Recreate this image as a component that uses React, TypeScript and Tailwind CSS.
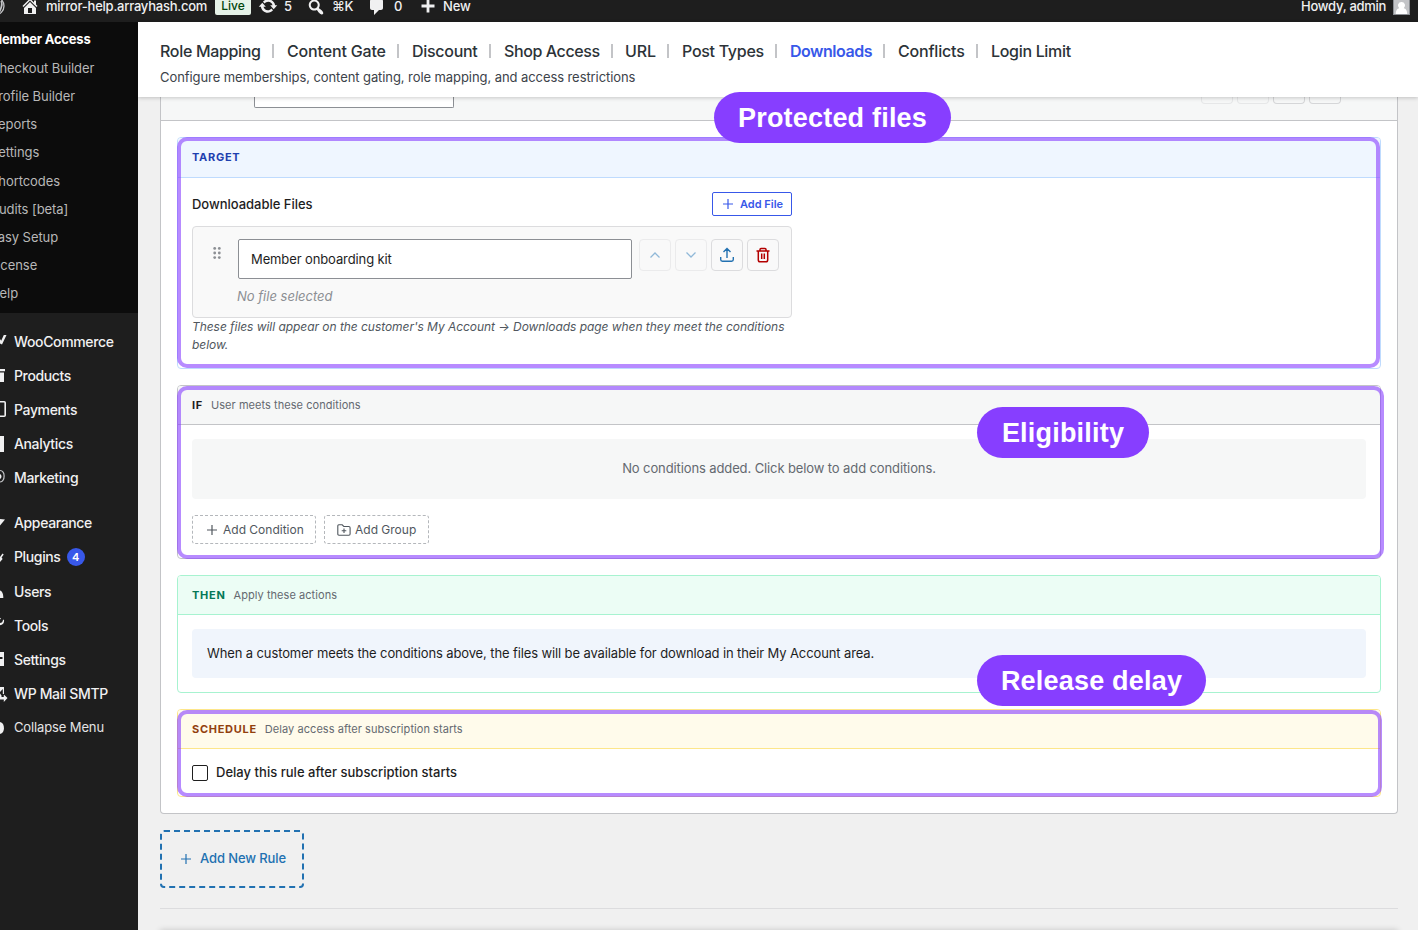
import type { ReactNode } from "react";
import clsx from "clsx";

const topIcons = {
  home: "M16 8.5l1.53 1.53-1.06 1.06L10 4.6l-6.47 6.49-1.06-1.06L10 2.5l4 4v-2h2v4zm-6-2.46l6 5.99V18H4v-5.97zM12 17v-5H8v5h4z",
  update:
    "M10.2 3.28c3.53 0 6.43 2.61 6.92 6h2.08l-3.5 4-3.5-4h2.32c-.45-1.97-2.21-3.45-4.32-3.45-1.45 0-2.73.71-3.54 1.78L4.95 5.66C6.23 4.2 8.11 3.28 10.2 3.28zm-.4 13.44c-3.52 0-6.43-2.61-6.92-6H.8l3.5-4c1.17 1.33 2.33 2.67 3.5 4H5.48c.45 1.97 2.21 3.45 4.32 3.45 1.45 0 2.73-.71 3.54-1.78l1.71 1.95c-1.28 1.46-3.15 2.38-5.25 2.38z",
  search:
    "M12.14 4.18c1.87 1.87 2.11 4.75.72 6.89.12.1.22.21.36.31.2.16.47.36.81.59.34.24.56.39.66.47.42.31.73.57.94.78.32.32.6.65.84 1 .25.35.44.69.59 1.04.14.35.21.68.18 1-.02.32-.14.59-.36.81s-.49.34-.81.36c-.31.02-.65-.04-.99-.19-.35-.14-.7-.34-1.04-.59-.35-.24-.68-.52-1-.84-.21-.21-.47-.52-.77-.93-.1-.13-.25-.35-.47-.66-.22-.32-.4-.57-.56-.78-.16-.2-.29-.35-.44-.5-2.07 1.09-4.69.76-6.44-.98-2.14-2.15-2.14-5.64 0-7.78 2.15-2.15 5.63-2.15 7.78 0zm-1.41 6.36c1.36-1.37 1.36-3.58 0-4.95-1.37-1.37-3.59-1.37-4.95 0-1.37 1.37-1.37 3.58 0 4.95 1.36 1.37 3.58 1.37 4.95 0z",
  comment:
    "M5 2h9c1.1 0 2 .9 2 2v7c0 1.1-.9 2-2 2h-2l-5 5v-5H5c-1.1 0-2-.9-2-2V4c0-1.1.9-2 2-2z",
  plus: "M16.5 8.6v2.8h-5.1v5.1H8.6v-5.1H3.5V8.6h5.1V3.5h2.8v5.1z",
};

const TopIcon = ({ d, className }: { d: string; className?: string }) => (
  <svg
    viewBox="0 0 20 20"
    className={clsx("h-5 w-5 shrink-0 fill-[#f0f0f1]", className)}
  >
    <path d={d} />
  </svg>
);

const TopBar = () => (
  <header className="flex h-[22px] items-start overflow-hidden bg-[#1e1e1e] text-[13px] leading-[13px] whitespace-nowrap text-[#f0f0f1]">
    <svg viewBox="0 0 20 20" className="-mt-1 h-5 w-5 shrink-0 -ml-[15px]">
      <circle cx="10" cy="10" r="9" fill="none" stroke="#c3c4c7" strokeWidth="1.3" />
      <path d="M16 5c2 3 .5 6-1.5 11" fill="none" stroke="#c3c4c7" strokeWidth="1.6" />
    </svg>
    <TopIcon d={topIcons.home} className="-mt-1 ml-[15px]" />
    <span className="ml-[6px] w-[169px] font-medium tracking-[-0.018em]">
      mirror-help.arrayhash.com
    </span>
    <span className="h-[15px] w-9 rounded-b-[2px] bg-[#e6f2e8] text-center text-[12px] leading-[12px] font-medium text-[#00450c]">
      Live
    </span>
    <TopIcon d={topIcons.update} className="-mt-1 ml-[7px]" />
    <span className="ml-[6px] w-[22px] font-medium">5</span>
    <TopIcon d={topIcons.search} className="-mt-[3px]" />
    <span className="ml-[6px] w-[32px] font-medium tracking-[-0.02em]">⌘K</span>
    <TopIcon d={topIcons.comment} className="-mt-[3px] ml-[3px]" />
    <span className="ml-[7px] w-[24px] font-medium">0</span>
    <TopIcon d={topIcons.plus} className="-mt-1" />
    <span className="ml-[5px] font-medium tracking-[-0.01em]">New</span>
    <span className="ml-auto w-[92px] font-medium tracking-[-0.02em]">
      Howdy, admin
    </span>
    <svg viewBox="0 0 17 17" className="mr-[8px] h-[17px] w-[17px] -mt-[2px] shrink-0">
      <rect width="17" height="17" fill="#8c8f94" />
      <rect x="1" y="0" width="15" height="16" fill="#c3c4c7" />
      <path
        d="M8.5 4a3.5 3.5 0 0 1 2.3 6.2c2 .6 3.4 2 3.4 5.8H2.8c0-3.8 1.4-5.2 3.4-5.8A3.5 3.5 0 0 1 8.5 4z"
        fill="#fff"
      />
    </svg>
  </header>
);

const submenu = [
  "Checkout Builder",
  "Profile Builder",
  "Reports",
  "Settings",
  "Shortcodes",
  "Audits [beta]",
  "Easy Setup",
  "License",
  "Help",
];

type MenuEntry = {
  label: string;
  icon: ReactNode;
  gap?: boolean;
  badge?: number;
  small?: boolean;
};

const menu: MenuEntry[] = [
  { label: "WooCommerce", icon: <path d="M0 12.5V8l1.2 1.8L3.800 4h2.700L2 13.500z" /> },
  { label: "Products", icon: <path d="M0 4h5v2.200H0zM0 7.500h4V17H0z" /> },
  {
    label: "Payments",
    icon: <path d="M0 2.800h4.200q1 0 1 1v12.400q0 1-1 1H0" fill="none" stroke="#f0f0f1" strokeWidth="1.6" />,
  },
  { label: "Analytics", icon: <path d="M0 2h4v16H0z" /> },
  {
    label: "Marketing",
    icon: (
      <>
        <path d="M0 2.500c5.500 0 5.500 10.500 0 11.500" fill="none" stroke="#c3c4c7" strokeWidth="1.2" />
        <path d="M0 6c2 1 2 4 0 5z" />
      </>
    ),
  },
  { label: "Appearance", gap: true, icon: <path d="M0 6l5 .5L0 12.500z" /> },
  { label: "Plugins", badge: 4, icon: <path d="M0 10l2.500-3.500 1.200 1L1.600 10.500 2.600 12 0 15z" /> },
  { label: "Users", icon: <path d="M0 9.500c2 .8 3.300 2.500 3.300 7.500H0z" /> },
  {
    label: "Tools",
    icon: <path d="M0 8c1.500 0 3-1 3-3.500l1 .5c.5 3-1.500 5-4 5.200zM0 3.500l1-.8v1.800z" />,
  },
  { label: "Settings", icon: <path d="M0 3h4v14H0v-7h2.500V8H0z" /> },
  {
    label: "WP Mail SMTP",
    icon: (
      <>
        <path d="M0 3h4v7H2.800V5L0 8z" />
        <path d="M0 9.500l1.500 2V13h2.300v-2.500L7.500 14l-3.700 4v-2.500H0z" />
      </>
    ),
  },
  { label: "Collapse Menu", small: true, icon: <path d="M0 4c5.300.5 5.300 11.500 0 12z" /> },
];

const Sidebar = () => (
  <nav className="w-[138px] shrink-0 overflow-hidden bg-[#1e1e1e] whitespace-nowrap">
    <div className="h-[291px] bg-[#0c0c0c] pt-[3px] text-[13px]">
      <div className="-ml-[10px] h-[29px] leading-[28px] font-bold tracking-[-0.015em] text-white">
        Member Access
      </div>
      <ul className="-ml-[10px] tracking-[-0.005em] text-[#b8b8b8]">
        {submenu.map((item) => (
          <li key={item} className="h-[28.15px] leading-[28.5px]">
            {item}
          </li>
        ))}
      </ul>
    </div>
    <ul className="pt-[11px] text-[14px] font-medium text-[#f0f0f1]">
      {menu.map((item) => (
        <li
          key={item.label}
          className={clsx("flex h-[34.2px] items-center", item.gap && "mt-[10.6px]")}
        >
          <svg viewBox="0 0 8 20" className="mr-[6px] h-5 w-2 shrink-0 fill-[#f0f0f1]">
            {item.icon}
          </svg>
          <span
            className={
              item.small
                ? "text-[13px] font-normal tracking-[-0.01em] text-[#e4e4e5]"
                : "tracking-[-0.026em]"
            }
          >
            {item.label}
          </span>
          {item.badge && (
            <span className="ml-[6px] h-[18px] w-[18px] rounded-full bg-[#3858e9] text-center text-[11px] leading-[18px] font-semibold text-white">
              {item.badge}
            </span>
          )}
        </li>
      ))}
    </ul>
  </nav>
);

const tabs = [
  { label: "Role Mapping", style: "w-[112px] tracking-[-0.02em]" },
  { label: "Content Gate", style: "w-[110px] tracking-[-0.01em]" },
  { label: "Discount", style: "w-[77px] tracking-[-0.018em]" },
  { label: "Shop Access", style: "w-[107px] tracking-[-0.025em]" },
  { label: "URL", style: "w-[42px] -ml-px tracking-[-0.01em]" },
  { label: "Post Types", style: "w-[93px] tracking-[-0.018em]" },
  { label: "Downloads", style: "w-[93px] tracking-[-0.03em]", active: true },
  { label: "Conflicts", style: "w-[78px] tracking-[-0.012em]" },
  { label: "Login Limit", style: "w-[90px] tracking-[-0.02em]" },
];

const PageHeader = () => (
  <div className="relative z-10 h-[75px] bg-white pl-[22px] pt-[19px] whitespace-nowrap shadow-[0_1px_4px_rgba(0,0,0,0.2)]">
    <div className="flex h-5 items-center text-[16px] leading-5 font-medium text-[#2c3338]">
      {tabs.map((tab, i) => (
        <div key={tab.label} className="flex items-center">
          {i > 0 && <div className="mr-[13px] h-[14px] w-[2px] bg-[#c3c4c7]" />}
          <div className={clsx(tab.style, tab.active && "font-semibold text-[#3858e9]")}>
            {tab.label}
          </div>
        </div>
      ))}
    </div>
    <p className="mt-[7px] text-[13px] leading-[18px] tracking-[-0.006em] text-[#3c434a]">
      Configure memberships, content gating, role mapping, and access restrictions
    </p>
  </div>
);

const PlusIcon = ({ className }: { className?: string }) => (
  <svg viewBox="0 0 12 12" className={clsx("h-3 w-3 shrink-0", className)}>
    <path d="M6 1v10M1 6h10" fill="none" stroke="currentColor" strokeWidth="1.2" />
  </svg>
);

const Pill = ({ className, children }: { className: string; children: ReactNode }) => (
  <div
    className={clsx(
      "absolute z-20 flex h-[51px] items-center justify-center rounded-full bg-[#873eff] pt-px font-['Liberation_Sans',sans-serif] text-[27px] font-bold tracking-[0.2px] whitespace-nowrap text-white",
      className,
    )}
  >
    {children}
  </div>
);

const Outline = ({ className }: { className: string }) => (
  <div
    className={clsx(
      "pointer-events-none absolute rounded-[10px] border-4 border-[#873eff]/60",
      className,
    )}
  />
);

type SectionProps = {
  title: string;
  hint?: string;
  box: string;
  head: string;
  titleColor: string;
  children: ReactNode;
};

const Section = ({ title, hint, box, head, titleColor, children }: SectionProps) => (
  <section className={clsx("relative rounded-[4px] border", box)}>
    <div
      className={clsx(
        "flex items-center gap-2 rounded-t-[3px] border-b px-[14px] text-[11px]",
        head,
      )}
    >
      <h3 className={clsx("font-bold tracking-[0.065em]", titleColor)}>{title}</h3>
      {hint && <span className="tracking-[0.005em] text-[#646970]">{hint}</span>}
    </div>
    {children}
  </section>
);

const iconButton =
  "flex h-8 w-8 items-center justify-center rounded-[4px] border";

const FileRow = () => (
  <div className="flex h-[92px] rounded-[4px] border border-[#dcdcde] bg-[#f9f9f9] pt-3">
    <svg viewBox="0 0 8 14" className="mt-[7px] ml-5 h-[14px] w-2 fill-[#8c8f94]">
      {[2.4, 7, 11.6].map((y) => (
        <g key={y}>
          <circle cx="1.7" cy={y} r="1.4" />
          <circle cx="6.3" cy={y} r="1.4" />
        </g>
      ))}
    </svg>
    <div className="ml-[17px]">
      <div className="flex h-10 w-[394px] items-center rounded-[2px] border border-[#8c8f94] bg-white px-3 pt-[2px] text-[13px] text-[#1e1e1e]">
        Member onboarding kit
      </div>
      <p className="mt-2 -ml-px text-[13px] leading-[19px] tracking-normal text-[#8c8f94] italic">
        No file selected
      </p>
    </div>
    <div className="ml-[7px] flex gap-1">
      <button className={clsx(iconButton, "border-[#ebebec] text-[#90b8d8]")}>
        <svg viewBox="0 0 12 12" className="h-3 w-3">
          <path d="M1.500 8.500L6 4l4.500 4.500" fill="none" stroke="currentColor" strokeWidth="1.3" />
        </svg>
      </button>
      <button className={clsx(iconButton, "border-[#ebebec] text-[#90b8d8]")}>
        <svg viewBox="0 0 12 12" className="h-3 w-3">
          <path d="M1.500 3.500L6 8l4.500-4.500" fill="none" stroke="currentColor" strokeWidth="1.3" />
        </svg>
      </button>
      <button className={clsx(iconButton, "border-[#dcdcde] text-[#2271b1]")}>
        <svg viewBox="0 0 16 16" className="h-4 w-4">
          <path
            d="M8 11V2M4.500 5L8 1.500 11.500 5M1.700 10v2.500q0 1.700 1.700 1.700h9.200q1.700 0 1.700-1.700V10"
            fill="none"
            stroke="currentColor"
            strokeWidth="1.4"
          />
        </svg>
      </button>
      <button className={clsx(iconButton, "border-[#dcdcde] text-[#b30000]")}>
        <svg viewBox="0 0 16 16" className="h-4 w-4">
          <path
            d="M1.500 4h13M5 4V2.500q0-1 1-1h4q1 0 1 1V4M3.300 4v9q0 1.800 1.800 1.800h5.800q1.800 0 1.800-1.800V4M6.700 6.500v5.500M9.300 6.500v5.500"
            fill="none"
            stroke="currentColor"
            strokeWidth="1.5"
          />
        </svg>
      </button>
    </div>
  </div>
);

const dashedButton =
  "flex h-[29px] items-center rounded-[3px] border border-dashed border-[#b4b7bb] text-[12px] tracking-normal text-[#50575e]";

const RuleCard = () => (
  <div className="relative h-[717px] rounded-b-[4px] border border-t-0 border-[#c3c4c7] bg-white">
    <div className="flex h-[24px] items-start justify-between border-b border-[#c3c4c7] bg-[#f6f7f7] pr-[56px] pl-[93px]">
      <div className="h-[11px] w-[200px] rounded-b-[2px] border border-t-0 border-[#8c8f94] bg-white" />
      <div className="flex gap-1">
        <div className="h-[7px] w-8 rounded-b-[4px] border border-t-0 border-[#e6e7e8]" />
        <div className="h-[7px] w-8 rounded-b-[4px] border border-t-0 border-[#e6e7e8]" />
        <div className="h-[7px] w-8 rounded-b-[4px] border border-t-0 border-[#d5d6d8]" />
        <div className="h-[7px] w-8 rounded-b-[4px] border border-t-0 border-[#d5d6d8]" />
      </div>
    </div>

    <div className="flex flex-col gap-4 p-4">
      <Section
        title="TARGET"
        box="h-[232px] border-[#bfdbfe]"
        head="h-[40px] border-[#bfdbfe] bg-[#eff6ff]"
        titleColor="text-[#1e40af]"
      >
        <div className="w-[628px] p-[14px]">
          <div className="mb-[10px] flex h-6 items-center justify-between">
            <span className="pt-px text-[13px] font-medium tracking-[-0.002em] text-[#1e1e1e]">
              Downloadable Files
            </span>
            <button className="flex h-6 w-20 items-center rounded-[2px] border border-[#3858e9] pl-[9px] text-[11px] font-semibold tracking-normal text-[#3858e9]">
              <PlusIcon className="mr-[6px]" />
              Add File
            </button>
          </div>
          <FileRow />
          <p className="text-[12px] leading-[18px] tracking-[-0.0038em] text-[#50575e] italic">
            These files will appear on the customer's My Account → Downloads page
            when they meet the conditions below.
          </p>
        </div>
        <Outline className="-top-px -left-px h-[231px] w-[1203px]" />
      </Section>

      <Section
        title="IF"
        hint="User meets these conditions"
        box="h-[174px] border-[#c3c4c7]"
        head="h-[39px] border-[#c3c4c7] bg-[#f6f7f7]"
        titleColor="text-[#1e1e1e]"
      >
        <div className="p-[14px]">
          <div className="flex h-[60px] items-center justify-center rounded-[4px] bg-[#f6f7f7] text-[13px] text-[#646970]">
            No conditions added. Click below to add conditions.
          </div>
          <div className="mt-4 flex gap-2">
            <button className={clsx(dashedButton, "w-[124px] pl-[13px]")}>
              <PlusIcon className="mr-[5px]" />
              Add Condition
            </button>
            <button className={clsx(dashedButton, "w-[105px] pl-[12px]")}>
              <svg viewBox="0 0 14 14" className="mr-1 h-[14px] w-[14px]">
                <path
                  d="M.8 11V2.800q0-1 1-1h3.400L6.800 3.500h5q1.300 0 1.300 1.200V11q0 1.200-1.200 1.200H2Q.8 12.200.8 11zM7 5.500v4.600M4.700 7.800h4.600"
                  fill="none"
                  stroke="currentColor"
                  strokeWidth="1.1"
                />
              </svg>
              Add Group
            </button>
          </div>
        </div>
        <Outline className="top-0 -left-px h-[173px] w-[1207px]" />
      </Section>

      <Section
        title="THEN"
        hint="Apply these actions"
        box="h-[118px] border-[#a7f3d0]"
        head="h-[39px] border-[#a7f3d0] bg-[#ecfdf5]"
        titleColor="text-[#047857]"
      >
        <div className="p-[14px]">
          <div className="flex h-[49px] items-center rounded-[4px] bg-[#f0f5fc] pl-[15px] text-[13px] tracking-[-0.009em] text-[#1e1e1e]">
            When a customer meets the conditions above, the files will be available
            for download in their My Account area.
          </div>
        </div>
      </Section>

      <Section
        title="SCHEDULE"
        hint="Delay access after subscription starts"
        box="h-[88px] border-[#fde68a]"
        head="h-[39px] border-[#fde68a] bg-[#fffbeb]"
        titleColor="text-[#92400e]"
      >
        <label className="flex h-12 items-center gap-2 pl-[14px] text-[13px] font-medium tracking-[0.002em] text-[#1e1e1e]">
          <span className="h-4 w-4 rounded-[2px] border border-[#1e1e1e] bg-white" />
          <span>Delay this rule after subscription starts</span>
        </label>
        <Outline className="top-0 -left-px h-[87px] w-[1205px]" />
      </Section>
    </div>

    <Pill className="-top-[5px] left-[553px] w-[237px]">Protected files</Pill>
    <Pill className="top-[310px] left-[816px] w-[172px]">Eligibility</Pill>
    <Pill className="top-[558px] left-[816px] w-[229px]">Release delay</Pill>
  </div>
);

export default function App() {
  return (
    <div className="h-[930px] w-[1418px] overflow-hidden bg-[#f0f0f0] font-['Inter',sans-serif] antialiased">
      <TopBar />
      <div className="flex h-[908px]">
        <Sidebar />
        <main className="min-w-0 flex-1 tracking-[-0.007em]">
          <PageHeader />
          <div className="pr-5 pl-[22px]">
            <RuleCard />
            <button className="mt-4 flex h-[58px] w-36 items-center rounded-[4px] border-2 border-dashed border-[#2271b1] pl-[18px] text-[13px] font-medium text-[#2271b1]">
              <PlusIcon className="mr-2" />
              Add New Rule
            </button>
            <div className="mt-5 h-px bg-[#dcdcde]" />
            <div className="mt-[21px] h-10 bg-white shadow-[0_0_6px_rgba(0,0,0,0.18)]" />
          </div>
        </main>
      </div>
    </div>
  );
}
